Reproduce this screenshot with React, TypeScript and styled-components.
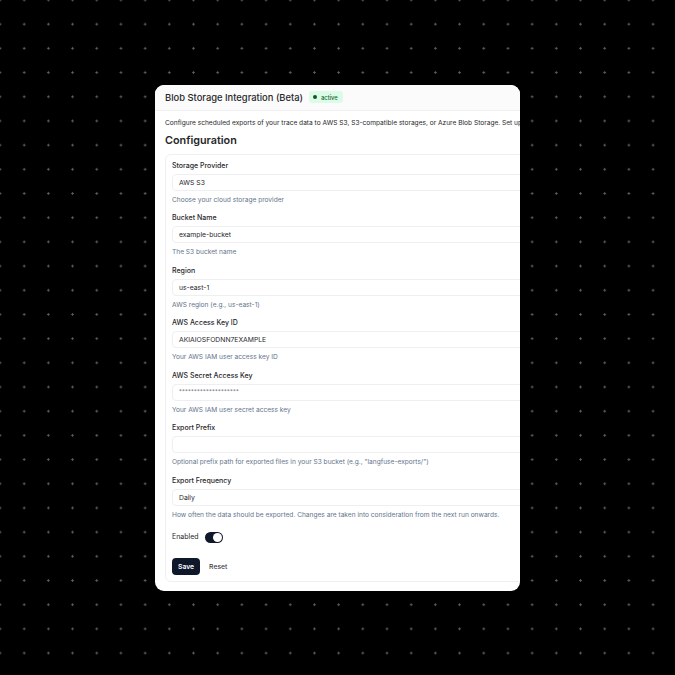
import React from "react";
import styled, { createGlobalStyle } from "styled-components";

const Global = createGlobalStyle`
  html, body { margin: 0; padding: 0; }
  body {
    background-color: #000;
    background-image: radial-gradient(circle, #5e5e5e 0.9px, transparent 1.4px);
    background-size: 24.2px 24.2px;
    background-position: -12.1px -12.1px;
    font-family: Inter, "Noto Sans", sans-serif;
    -webkit-font-smoothing: antialiased;
  }
  #root { min-height: 100vh; }
`;

const Stage = styled.div`
  width: 675px;
  height: 675px;
  display: flex;
  align-items: center;
  justify-content: center;
`;

const Card = styled.div`
  width: 365px;
  height: 506px;
  background: #fff;
  border-radius: 9px;
  overflow: hidden;
  display: flex;
  flex-direction: column;
`;

const Header = styled.div`
  height: 25px;
  flex: none;
  display: flex;
  align-items: center;
  gap: 6px;
  padding: 0 10px;
  background: #fbfbfb;
  border-bottom: 1px solid #efeff1;
`;

const Title = styled.div`
  font-size: 9.4px;
  font-weight: 500;
  color: #27272a;
  white-space: nowrap;
`;

const Badge = styled.div`
  display: flex;
  align-items: center;
  gap: 4px;
  height: 12px;
  padding: 0 5px 0 4px;
  border-radius: 3px;
  background: #dcfce7;
  color: #166534;
  font-size: 5.8px;
  font-weight: 500;
`;

const Dot = styled.span`
  width: 4px;
  height: 4px;
  border-radius: 50%;
  background: #14532d;
`;

const Body = styled.div`
  padding: 0 10px;
  width: 620px;
  flex: 1;
  display: flex;
  flex-direction: column;
`;

const Description = styled.p`
  margin: 7px 0 0;
  font-size: 6.6px;
  line-height: 10px;
  color: #27272a;
  white-space: nowrap;
`;

const Heading = styled.h2`
  margin: 5px 0 0;
  font-size: 10.8px;
  line-height: 16px;
  font-weight: 600;
  color: #27272a;
`;

const FormBox = styled.div`
  margin-top: 5px;
  border: 1px solid #efeff1;
  border-radius: 6px;
  padding: 6px 6px 6px;
  display: flex;
  flex-direction: column;
`;

const Field = styled.div`
  display: flex;
  flex-direction: column;
  margin-bottom: 8.5px;
`;

const Label = styled.label<{ $plain?: boolean }>`
  font-size: 7px;
  line-height: 10px;
  font-weight: ${(p) => (p.$plain ? 400 : 500)};
  color: #27272a;
`;

const Input = styled.div<{ $secret?: boolean }>`
  margin-top: 3px;
  height: 17px;
  box-sizing: border-box;
  border: 1px solid #efeff1;
  border-radius: 4px;
  display: flex;
  align-items: center;
  padding: 0 6px;
  font-size: ${(p) => (p.$secret ? "5.6px" : "6.8px")};
  color: ${(p) => (p.$secret ? "#71717a" : "#27272a")};
  letter-spacing: ${(p) => (p.$secret ? "0.2px" : "0")};
`;

const Help = styled.div`
  margin-top: 4px;
  font-size: 6.6px;
  line-height: 10px;
  color: #64748b;
  white-space: nowrap;
`;

const ToggleRow = styled.div`
  display: flex;
  align-items: center;
  gap: 6px;
  margin-top: 3px;
  height: 12px;
`;

const Toggle = styled.div`
  width: 18px;
  height: 11px;
  border-radius: 6px;
  background: #0f172a;
  display: flex;
  align-items: center;
  justify-content: flex-end;
  padding: 0 1px;
  box-sizing: border-box;
`;

const Thumb = styled.span`
  width: 9px;
  height: 9px;
  border-radius: 50%;
  background: #fff;
`;

const Actions = styled.div`
  display: flex;
  align-items: center;
  gap: 3px;
  margin-top: 15px;
`;

const Button = styled.button<{ $primary?: boolean }>`
  height: 17px;
  padding: 0 6px;
  border: none;
  border-radius: 4px;
  font-family: inherit;
  font-size: 6.8px;
  font-weight: ${(p) => (p.$primary ? 600 : 500)};
  background: ${(p) => (p.$primary ? "#0f172a" : "transparent")};
  color: ${(p) => (p.$primary ? "#fff" : "#3f3f46")};
  min-width: ${(p) => (p.$primary ? "27px" : "auto")};
`;

const fields = [
  { label: "Storage Provider", value: "AWS S3", help: "Choose your cloud storage provider" },
  { label: "Bucket Name", value: "example-bucket", help: "The S3 bucket name" },
  { label: "Region", value: "us-east-1", help: "AWS region (e.g., us-east-1)" },
  { label: "AWS Access Key ID", value: "AKIAIOSFODNN7EXAMPLE", help: "Your AWS IAM user access key ID" },
  { label: "AWS Secret Access Key", value: "********************", help: "Your AWS IAM user secret access key", secret: true },
  { label: "Export Prefix", value: "", help: 'Optional prefix path for exported files in your S3 bucket (e.g., "langfuse-exports/")' },
  { label: "Export Frequency", value: "Daily", help: "How often the data should be exported. Changes are taken into consideration from the next run onwards." },
];

export default function App() {
  return (
    <>
      <Global />
      <Stage>
        <Card>
          <Header>
            <Title>Blob Storage Integration (Beta)</Title>
            <Badge>
              <Dot />
              active
            </Badge>
          </Header>
          <Body>
            <Description>
              Configure scheduled exports of your trace data to AWS S3, S3-compatible storages, or Azure Blob Storage. Set up
              a recurring export to automatically send your data to your own storage.
            </Description>
            <Heading>Configuration</Heading>
            <FormBox>
              {fields.map((f) => (
                <Field key={f.label}>
                  <Label>{f.label}</Label>
                  <Input $secret={f.secret}>{f.value}</Input>
                  <Help>{f.help}</Help>
                </Field>
              ))}
              <ToggleRow>
                <Label $plain>Enabled</Label>
                <Toggle>
                  <Thumb />
                </Toggle>
              </ToggleRow>
              <Actions>
                <Button $primary>Save</Button>
                <Button>Reset</Button>
              </Actions>
            </FormBox>
          </Body>
        </Card>
      </Stage>
    </>
  );
}
